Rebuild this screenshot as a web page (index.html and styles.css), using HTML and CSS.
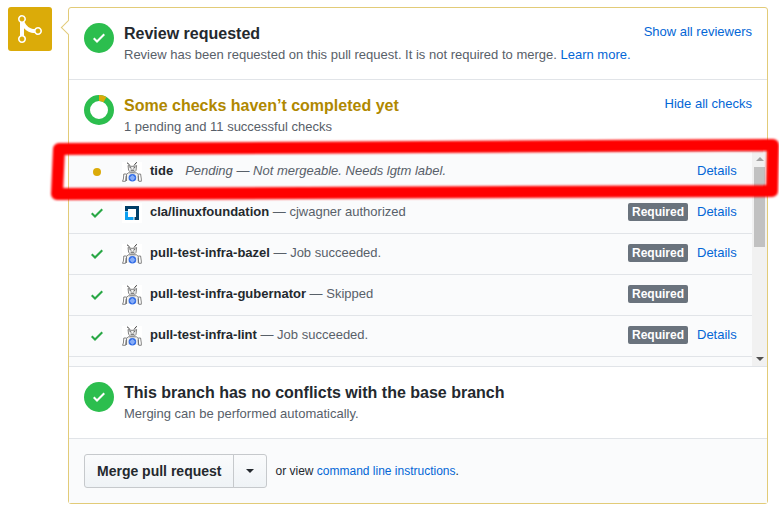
FILE: index.html
```html
<!DOCTYPE html>
<html lang="en">
<head>
<meta charset="utf-8">
<title>Pull request merge status</title>
<link rel="stylesheet" href="styles.css">
</head>
<body>
<svg class="sprites" aria-hidden="true">
  <symbol id="check" viewBox="0 0 12 16"><path d="M12 5l-8 8-4-4 1.5-1.5L4 10l6.5-6.5z"/></symbol>
  <symbol id="robot" viewBox="0 0 20 20">
    <rect width="20" height="20" fill="#fff"/>
    <g fill="none" stroke="#666" stroke-width=".8">
      <path d="M8 3.800L6 1.200 5 1M12 3.600L14 .8 15 .6" stroke="#222"/>
      <path d="M6 3.500L6.600 8.400 8.400 10h4l1.600-1.600.6-4.900-1.800.8H7.800z" fill="#f4f4f4"/>
      <path d="M7.600 5.400l1.800.8M13.200 5.400l-1.800.8M8.600 8.200h3.700" stroke="#222"/>
      <path d="M4.500 19v-6.600L6.400 10.800h8l1.900 1.600V19" fill="#f1f1f1"/>
      <path d="M4.500 12H1.800L1.400 17l-.9 2.300h3l.6-5.500M16.300 12h2.300l.7 5v2.300h-2.500l-.6-5.500"/>
    </g>
    <circle cx="10.400" cy="15.800" r="3.800" fill="#326de6"/>
    <circle cx="10.400" cy="15.800" r="1.900" fill="#7fa8f7" stroke="#a9c5fb" stroke-width=".6"/>
    <path d="M10.400 12.800v6M7.400 15.800h6" stroke="#8fb3fb" stroke-width=".5"/>
  </symbol>
  <symbol id="linuxfoundation" viewBox="0 0 20 20">
    <rect width="20" height="20" fill="#fff"/>
    <path d="M3 3h14v14h-4.500v-3H14V6H6v2H3z" fill="#003f68"/>
    <path d="M3 8.500h3V14h5.500v3H3z" fill="#0c9ff0"/>
  </symbol>
</svg>

<main class="merge">
  <div class="merge-avatar">
    <svg width="24" height="32" viewBox="0 0 12 16" fill="currentColor" aria-hidden="true"><path d="M10 7c-.73 0-1.38.41-1.73 1.02V8C7.22 7.98 6 7.64 5.14 6.98c-.75-.58-1.5-1.61-1.89-2.44A1.993 1.993 0 0 0 2 .99C.89.99 0 1.89 0 3a2 2 0 0 0 1 1.72v6.56c-.59.35-1 .99-1 1.72 0 1.11.89 2 2 2a1.993 1.993 0 0 0 1-3.72V7.67c.67.7 1.44 1.27 2.3 1.69.86.42 2.03.63 2.97.64v-.02c.36.61 1 1.02 1.73 1.02 1.11 0 2-.89 2-2 0-1.11-.89-2-2-2zm-6.8 6c0 .66-.55 1.2-1.2 1.2-.65 0-1.2-.55-1.2-1.2 0-.65.55-1.2 1.2-1.2.65 0 1.2.55 1.2 1.2zm0-10c0 .66-.55 1.2-1.2 1.2C1.35 4.200.8 3.650.8 3c0-.65.55-1.2 1.2-1.2.65 0 1.2.55 1.2 1.2zm8 6c0 .66-.55 1.2-1.2 1.2-.65 0-1.2-.55-1.2-1.2 0-.65.55-1.2 1.2-1.2.65 0 1.2.55 1.2 1.2z"/></svg>
  </div>

  <div class="card">
    <section class="section">
      <div class="summary">
        <span class="badge-icon"><svg width="12" height="16"><use href="#check"/></svg></span>
        <div class="summary-text">
          <h2>Review requested</h2>
          <p>Review has been requested on this pull request. It is not required to merge. <a href="#">Learn more.</a></p>
        </div>
        <a class="toggle" href="#">Show all reviewers</a>
      </div>
    </section>

    <section class="section">
      <div class="summary">
        <svg class="donut" width="30" height="30" viewBox="0 0 30 30" aria-hidden="true">
          <circle cx="15" cy="15" r="12" fill="none" stroke="#2cbe4e" stroke-width="6"/>
          <path d="M15 3A12 12 0 0 1 21 4.600" fill="none" stroke="#dbab09" stroke-width="6"/>
        </svg>
        <div class="summary-text">
          <h2 class="pending">Some checks haven’t completed yet</h2>
          <p>1 pending and 11 successful checks</p>
        </div>
        <a class="toggle" href="#">Hide all checks</a>
      </div>

      <div class="checks">
        <ul class="check-list">
          <li class="check">
            <span class="state"><span class="dot"></span></span>
            <svg class="app" width="20" height="20"><use href="#robot"/></svg>
            <span class="check-text"><strong>tide</strong><em>Pending — Not mergeable. Needs lgtm label.</em></span>
            <a class="details" href="#">Details</a>
          </li>
          <li class="check">
            <span class="state"><svg width="12" height="16"><use href="#check"/></svg></span>
            <svg class="app" width="20" height="20"><use href="#linuxfoundation"/></svg>
            <span class="check-text"><strong>cla/linuxfoundation</strong> — cjwagner authorized</span>
            <span class="required">Required</span>
            <a class="details" href="#">Details</a>
          </li>
          <li class="check">
            <span class="state"><svg width="12" height="16"><use href="#check"/></svg></span>
            <svg class="app" width="20" height="20"><use href="#robot"/></svg>
            <span class="check-text"><strong>pull-test-infra-bazel</strong> — Job succeeded.</span>
            <span class="required">Required</span>
            <a class="details" href="#">Details</a>
          </li>
          <li class="check">
            <span class="state"><svg width="12" height="16"><use href="#check"/></svg></span>
            <svg class="app" width="20" height="20"><use href="#robot"/></svg>
            <span class="check-text"><strong>pull-test-infra-gubernator</strong> — Skipped</span>
            <span class="required">Required</span>
            <span class="details"></span>
          </li>
          <li class="check">
            <span class="state"><svg width="12" height="16"><use href="#check"/></svg></span>
            <svg class="app" width="20" height="20"><use href="#robot"/></svg>
            <span class="check-text"><strong>pull-test-infra-lint</strong> — Job succeeded.</span>
            <span class="required">Required</span>
            <a class="details" href="#">Details</a>
          </li>
        </ul>
        <div class="scrollbar" aria-hidden="true">
          <span class="arrow up"></span>
          <span class="thumb"></span>
          <span class="arrow down"></span>
        </div>
        <svg class="marker" viewBox="0 0 731 70" preserveAspectRatio="none" aria-hidden="true">
          <path d="M11 14L725 10 724 56 9 59z"/>
        </svg>
      </div>
    </section>

    <section class="section">
      <div class="summary">
        <span class="badge-icon"><svg width="12" height="16"><use href="#check"/></svg></span>
        <div class="summary-text">
          <h2>This branch has no conflicts with the base branch</h2>
          <p>Merging can be performed automatically.</p>
        </div>
      </div>
    </section>

    <section class="section actions">
      <div class="button-group">
        <button type="button" class="button">Merge pull request</button>
        <button type="button" class="button menu" aria-label="Select merge method"><span class="caret"></span></button>
      </div>
      <p class="hint">or view <a href="#">command line instructions</a>.</p>
    </section>
  </div>
</main>
</body>
</html>
```
FILE: styles.css
```css
* {
  box-sizing: border-box;
}

body {
  margin: 0;
  background: #fff;
  color: #24292e;
  font: 13px/20px "Liberation Sans", Arial, sans-serif;
}

h2,
p,
ul {
  margin: 0;
  padding: 0;
}

a {
  color: #0366d6;
  text-decoration: none;
}

.sprites {
  position: absolute;
  width: 0;
  height: 0;
}

.merge {
  display: flex;
  align-items: flex-start;
  gap: 16px;
  padding: 7px 11px 8px 8px;
}

.merge-avatar {
  display: flex;
  flex: none;
  align-items: center;
  justify-content: center;
  width: 44px;
  height: 44px;
  border-radius: 3px;
  background: #dbab09;
  color: #fff;
}

.card {
  position: relative;
  flex: 1;
  min-width: 0;
  border: 1px solid #e2cb78;
  border-radius: 3px;
}

/* Arrow pointing from the card to the avatar */
.card::before {
  content: "";
  position: absolute;
  top: 14px;
  left: -6px;
  width: 10px;
  height: 10px;
  border: solid #e2cb78;
  border-width: 0 0 1px 1px;
  background: #fff;
  transform: rotate(45deg);
}

.section + .section {
  border-top: 1px solid #e1e4e8;
}

.summary {
  display: flex;
  align-items: flex-start;
  gap: 10px;
  padding: 15px 15px 13px;
}

.badge-icon {
  display: flex;
  flex: none;
  align-items: center;
  justify-content: center;
  width: 30px;
  height: 30px;
  border-radius: 50%;
  background: #2cbe4e;
  fill: #fff;
}

.donut {
  flex: none;
}

.summary-text {
  flex: 1;
  min-width: 0;
  color: #586069;
}

.summary-text p {
  line-height: 22px;
}

h2 {
  color: #24292e;
  font-size: 16px;
  line-height: 21px;
}

h2.pending {
  color: #b08800;
}

.toggle {
  flex: none;
  line-height: 18px;
}

.checks {
  position: relative;
  display: flex;
  height: 215px;
  border-top: 1px solid #e1e4e8;
  background: #fafbfc;
}

.check-list {
  flex: 1;
  min-width: 0;
  list-style: none;
}

.check {
  display: flex;
  align-items: center;
  height: 41px;
  padding: 0 16px 2px 15px;
  border-bottom: 1px solid #e1e4e8;
  color: #586069;
}

.state {
  display: flex;
  flex: none;
  justify-content: center;
  width: 26px;
  margin-right: 12px;
  padding-top: 1px;
  fill: #28a745;
}

.dot {
  width: 8px;
  height: 8px;
  border-radius: 50%;
  background: #dbab09;
}

.app {
  flex: none;
  margin-right: 8px;
  margin-top: 2px;
}

.check-text {
  flex: 1;
  min-width: 0;
}

.check-text strong {
  color: #24292e;
}

.check-text em {
  margin-left: 12px;
}

.required {
  padding: 0 4px;
  border-radius: 2px;
  background: #6a737d;
  color: #fff;
  font-size: 12px;
  font-weight: bold;
  line-height: 18px;
}

.details {
  flex: none;
  width: 39px;
  margin-left: 9px;
}

.scrollbar {
  display: flex;
  flex: none;
  flex-direction: column;
  align-items: center;
  width: 15px;
  padding: 5px 0;
  background: #f1f1f1;
}

.arrow {
  border: 4px solid transparent;
}

.up {
  border-top: 0;
  border-bottom-color: #a3a3a3;
}

.down {
  margin-top: auto;
  border-bottom: 0;
  border-top-color: #505050;
}

.thumb {
  width: 11px;
  height: 80px;
  margin-top: 6px;
  background: #c1c1c1;
}

/* Hand-drawn highlight around the pending check */
.marker {
  position: absolute;
  top: -17px;
  left: -21px;
  width: calc(100% + 33px);
  height: 70px;
  overflow: visible;
  fill: none;
  stroke: #f00;
  stroke-width: 12px;
  stroke-linejoin: round;
  filter: blur(1px);
  pointer-events: none;
}

.actions {
  display: flex;
  align-items: center;
  gap: 8px;
  padding: 15px;
  background: #fafbfc;
}

.button-group {
  display: flex;
}

.button {
  height: 34px;
  padding: 0 12px;
  border: 1px solid #c6c9cc;
  border-radius: 3px 0 0 3px;
  background: linear-gradient(#fafbfc, #eff3f6);
  color: #24292e;
  font: bold 14px/20px "Liberation Sans", Arial, sans-serif;
}

.menu {
  margin-left: -1px;
  border-radius: 0 3px 3px 0;
}

.caret {
  display: block;
  border: 4px solid transparent;
  border-top-color: #24292e;
  border-bottom: 0;
}

.hint {
  font-size: 12px;
}
```
